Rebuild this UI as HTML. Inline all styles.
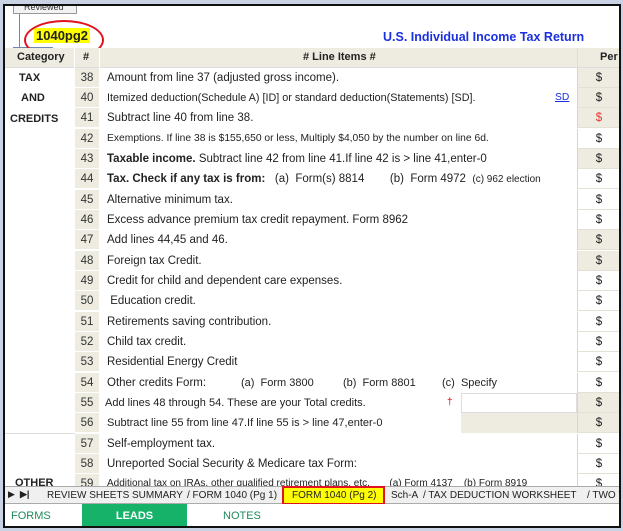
<!DOCTYPE html>
<html><head><style>
*{margin:0;padding:0;box-sizing:border-box}
body{width:623px;height:531px;background:#c9d3e3;position:relative;overflow:hidden;font-family:"Liberation Sans",sans-serif;font-size:11px;color:#222}
#f{position:absolute;left:3px;top:4px;width:618px;height:524px;background:#fff;border:2px solid #111;overflow:hidden}
.a{position:absolute;white-space:nowrap}
.row{position:absolute;left:0;width:618px;height:20px}
.num{position:absolute;left:70px;width:24px;height:20px;background:#eeece1;border-bottom:1px solid #fff;text-align:center;line-height:20px;font-size:11.5px;color:#333}
.txt{position:absolute;left:102px;line-height:20px;font-size:11.5px}
.sm{font-size:10.3px}
.per{position:absolute;left:572px;width:43px;height:20px;border-bottom:1px solid #e3e1d6;border-left:1px solid #d8d6cb;text-align:center;line-height:20px;font-size:11.5px}
.b{background:#eeece1}
.cat{position:absolute;font-weight:bold;font-size:11px;line-height:20px}
.tab{position:absolute;top:483px;font-size:10px;line-height:13px;color:#222;white-space:nowrap}
</style></head><body>
<div id="f">
<div class="a" style="left:8px;top:-4px;width:64px;height:12px;border:1px solid #999;background:#f2f2f2;font-size:9px;line-height:9px;padding-left:10px;color:#333">Reviewed</div>
<div class="a" style="left:14px;top:8px;width:1px;height:34px;background:#6f87b5"></div>
<div class="a" style="left:8px;top:41px;width:40px;height:1px;background:#6f87b5"></div>
<div class="a" style="left:29px;top:22px;background:#ffff00;font-weight:bold;font-size:13px;line-height:15px;padding:0 2px">1040pg2</div>
<div class="a" style="left:19px;top:14px;width:80px;height:40px;border:2.5px solid #e0141e;border-radius:50%"></div>
<div class="a" style="left:378px;top:24px;color:#1a2fe0;font-weight:bold;font-size:12.5px">U.S. Individual Income Tax Return</div>
<div class="a" style="left:0;top:42px;width:618px;height:20px;background:#eeece1;border-bottom:1px solid #ddd"></div>
<div class="a" style="left:69px;top:42px;width:1px;height:20px;background:#fff"></div>
<div class="a" style="left:94px;top:42px;width:1px;height:20px;background:#fff"></div>
<div class="a" style="left:572px;top:42px;width:1px;height:20px;background:#ddd"></div>
<div class="a" style="left:12px;top:45px;font-weight:bold;font-size:11px">Category</div>
<div class="a" style="left:78px;top:45px;font-weight:bold;font-size:11px">#</div>
<div class="a" style="left:298px;top:45px;font-weight:bold;font-size:11px">#  Line Items #</div>
<div class="a" style="left:595px;top:45px;font-weight:bold;font-size:11px">Per</div>
<div class="a" style="left:0;top:427px;width:70px;height:1px;background:#ddd"></div>

<div class="cat" style="left:14px;top:62px">TAX</div>
<div class="cat" style="left:16px;top:82px">AND</div>
<div class="cat" style="left:5px;top:103px">CREDITS</div>
<div class="cat" style="left:10px;top:467px">OTHER</div>

<div class="row" style="top:62px"><div class="num">38</div><div class="txt">Amount from line 37 (adjusted gross income).</div><div class="per b">$</div></div>
<div class="row" style="top:82px"><div class="num">40</div><div class="txt" style="font-size:10.8px">Itemized deduction(Schedule A) [ID] or standard deduction(Statements) [SD].</div><div class="txt sm" style="left:550px;color:#1a2fe0;text-decoration:underline">SD</div><div class="per b">$</div></div>
<div class="row" style="top:102px"><div class="num">41</div><div class="txt">Subtract line 40 from line 38.</div><div class="per b" style="color:#e33">$</div></div>
<div class="row" style="top:123px"><div class="num">42</div><div class="txt sm">Exemptions. If line 38 is $155,650 or less, Multiply $4,050 by the number on line 6d.</div><div class="per">$</div></div>
<div class="row" style="top:143px"><div class="num">43</div><div class="txt"><b>Taxable income.</b> Subtract line 42 from line 41.If line 42 is &gt; line 41,enter-0</div><div class="per b">$</div></div>
<div class="row" style="top:163px"><div class="num">44</div><div class="txt"><b>Tax. Check if any tax is from:</b> &nbsp; (a) &nbsp;Form(s) 8814 &nbsp; &nbsp; &nbsp; &nbsp;(b) &nbsp;Form 4972 &nbsp;<span style="font-size:10px">(c) 962 election</span></div><div class="per">$</div></div>
<div class="row" style="top:184px"><div class="num">45</div><div class="txt">Alternative minimum tax.</div><div class="per">$</div></div>
<div class="row" style="top:204px"><div class="num">46</div><div class="txt">Excess advance premium tax credit repayment. Form 8962</div><div class="per">$</div></div>
<div class="row" style="top:224px"><div class="num">47</div><div class="txt">Add lines 44,45 and 46.</div><div class="per b">$</div></div>
<div class="row" style="top:245px"><div class="num">48</div><div class="txt">Foreign tax Credit.</div><div class="per b">$</div></div>
<div class="row" style="top:265px"><div class="num">49</div><div class="txt">Credit for child and dependent care expenses.</div><div class="per">$</div></div>
<div class="row" style="top:285px"><div class="num">50</div><div class="txt">&nbsp;Education credit.</div><div class="per">$</div></div>
<div class="row" style="top:306px"><div class="num">51</div><div class="txt">Retirements saving contribution.</div><div class="per">$</div></div>
<div class="row" style="top:326px"><div class="num">52</div><div class="txt">Child tax credit.</div><div class="per">$</div></div>
<div class="row" style="top:346px"><div class="num">53</div><div class="txt">Residential Energy Credit</div><div class="per">$</div></div>
<div class="row" style="top:367px"><div class="num">54</div><div class="txt">Other credits Form:</div><div class="txt" style="left:236px;font-size:11px">(a) &nbsp;Form 3800</div><div class="txt" style="left:338px;font-size:11px">(b) &nbsp;Form 8801</div><div class="txt" style="left:437px;font-size:11px">(c) &nbsp;Specify</div><div class="per">$</div></div>
<div class="row" style="top:387px"><div class="num">55</div><div class="txt" style="left:100px;font-size:11px">Add lines 48 through 54. These are your Total credits.</div><div class="txt" style="left:442px;color:#e00;font-size:10px">†</div><div class="a" style="left:456px;top:0;width:116px;height:20px;border:1px solid #ddd;background:#fff"></div><div class="per b">$</div></div>
<div class="row" style="top:407px"><div class="num">56</div><div class="txt" style="font-size:11px">Subtract line 55 from line 47.If line 55 is &gt; line 47,enter-0</div><div class="a b" style="left:456px;top:0;width:116px;height:20px"></div><div class="per b">$</div></div>
<div class="row" style="top:428px"><div class="num">57</div><div class="txt">Self-employment tax.</div><div class="per">$</div></div>
<div class="row" style="top:448px"><div class="num">58</div><div class="txt">Unreported Social Security &amp; Medicare tax Form:</div><div class="per">$</div></div>
<div class="row" style="top:468px"><div class="num">59</div><div class="txt" style="font-size:10px">Additional tax on IRAs, other qualified retirement plans, etc. &nbsp; &nbsp; &nbsp; (a) Form 4137 &nbsp; &nbsp;(b) Form 8919</div><div class="per">$</div></div>

<div class="a" style="left:0;top:480px;width:618px;height:18px;background:#f0f0f0;border-top:1px solid #aaa;border-bottom:1px solid #aaa"></div>
<div class="a" style="left:3px;top:482px;font-size:9px;line-height:13px">&#9654;&nbsp;&nbsp;<b>&#9654;|</b></div>
<div class="tab" style="left:42px">REVIEW SHEETS SUMMARY</div>
<div class="tab" style="left:182px">/ FORM 1040 (Pg 1)</div>
<div class="a" style="left:277px;top:480px;width:103px;height:19px;border:2px solid #e0141e;background:#ffff00;font-size:10px;line-height:15px;padding-left:8px">FORM 1040 (Pg 2)</div>
<div class="tab" style="left:386px">Sch-A</div>
<div class="tab" style="left:418px">/ TAX DEDUCTION WORKSHEET</div>
<div class="tab" style="left:582px">/ TWO Y</div>
<div class="a" style="left:0;top:498px;width:618px;height:24px;background:#fff;border-bottom:1px solid #ccc"></div>
<div class="a" style="left:6px;top:504px;color:#1f8a5a;font-size:11px">FORMS</div>
<div class="a" style="left:77px;top:498px;width:105px;height:24px;background:#17b26a;color:#fff;font-weight:bold;text-align:center;line-height:24px;font-size:11px">LEADS</div>
<div class="a" style="left:218px;top:504px;color:#1f8a5a;font-size:11px">NOTES</div>
</div>
</body></html>
